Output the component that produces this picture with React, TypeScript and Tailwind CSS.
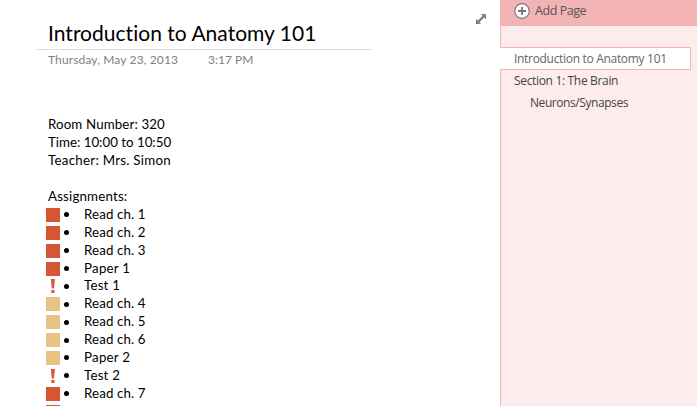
type Mark = "red" | "tan" | "important";

const assignments: { label: string; mark: Mark; spacing: string }[] = [
  { label: "Read ch. 1", mark: "red", spacing: "tracking-[0.12px]" },
  { label: "Read ch. 2", mark: "red", spacing: "tracking-[0.12px]" },
  { label: "Read ch. 3", mark: "red", spacing: "tracking-[0.12px]" },
  { label: "Paper 1", mark: "red", spacing: "tracking-[0.25px]" },
  { label: "Test 1", mark: "important", spacing: "tracking-[0.2px]" },
  { label: "Read ch. 4", mark: "tan", spacing: "tracking-[0.12px]" },
  { label: "Read ch. 5", mark: "tan", spacing: "tracking-[0.12px]" },
  { label: "Read ch. 6", mark: "tan", spacing: "tracking-[0.12px]" },
  { label: "Paper 2", mark: "tan", spacing: "tracking-[0.25px]" },
  { label: "Test 2", mark: "important", spacing: "tracking-[0.2px]" },
  { label: "Read ch. 7", mark: "red", spacing: "tracking-[0.12px]" },
  { label: "", mark: "red", spacing: "tracking-normal" },
];

function Tag({ mark }: { mark: Mark }) {
  if (mark === "important") {
    return (
      <svg className="h-3.5 w-3.5 shrink-0" viewBox="0 0 14 14" fill="#d95a3a">
        <path d="M4.8 0H9L8 9.6H5.8Z" />
        <rect x="5.3" y="11" width="3.2" height="3" />
      </svg>
    );
  }
  return <span className={`h-3.5 w-3.5 shrink-0 ${mark === "red" ? "bg-[#d65532]" : "bg-[#e8c282]"}`} />;
}

export default function App() {
  return (
    <div className="flex h-[406px] w-[697px] overflow-hidden bg-white">
      <main className="flex w-[500px] shrink-0 justify-between font-['Lato',sans-serif] text-black [font-variant-ligatures:none]">
        <div className="w-[372px] whitespace-nowrap">
          <header className="ml-9 h-[50px] border-b border-[#dedede] pt-[18px] pl-3">
            <h1 className="text-[21px] leading-[30px] tracking-[0.02px]">Introduction to Anatomy 101</h1>
          </header>
          <div className="flex h-5 pl-12 text-[12px] leading-5 text-[#808080]">
            <span className="w-40 tracking-[0.13px]">Thursday, May 23, 2013</span>
            <span>3:17 PM</span>
          </div>
          <div className="mt-[46px] text-[13.3px] leading-[17.9px]">
            <div className="pl-12">
              <p className="tracking-[0.13px]">Room Number: 320</p>
              <p>Time: 10:00 to 10:50</p>
              <p className="tracking-[0.27px]">Teacher: Mrs. Simon</p>
              <p className="mt-[17.9px] tracking-[0.18px]">Assignments:</p>
            </div>
            <ul className="pt-[0.4px] pl-[46px]">
              {assignments.map((a, i) => (
                <li key={i} className="flex h-[17.9px] items-center">
                  <Tag mark={a.mark} />
                  <span className={`ml-[3.5px] h-[5px] w-[5px] rounded-full ${a.label ? "bg-black" : ""}`} />
                  <span className={`ml-[15.5px] ${a.spacing}`}>{a.label}</span>
                </li>
              ))}
            </ul>
          </div>
        </div>
        <svg className="mt-[13px] mr-[13px] h-3 w-3" viewBox="0 0 12 12" fill="#808080">
          <path d="M5.8 1H11V6.2L9.2 4.4 4.4 9.2 6.2 11H1V5.8L2.8 7.6 7.6 2.8Z" />
        </svg>
      </main>
      <aside className="flex grow flex-col bg-[#fcecec] font-['Open_Sans',sans-serif] text-[12px] text-[#555] whitespace-nowrap">
        <div className="flex h-[26px] items-center bg-[#f2b4b4] pb-1 pl-3.5">
          <svg className="h-4 w-4" viewBox="0 0 16 16" fill="#fff" stroke="#777">
            <circle cx="8" cy="8" r="7.3" strokeWidth="1.2" />
            <path d="M8 4v8M4 8h8" strokeWidth="1.8" />
          </svg>
          <span className="ml-[5px] text-[12.5px] tracking-[-0.45px]">Add Page</span>
        </div>
        <div className="h-[21px] border-l border-[#f2b4b4]" />
        <div className="mr-1.5 h-[23px] border-y border-r border-[#f2b4b4] bg-white pl-3.5 leading-[21px] tracking-[-0.31px] text-[#666]">
          Introduction to Anatomy 101
        </div>
        <div className="grow border-l border-[#f2b4b4] pl-[13px] leading-[22px] text-[#444]">
          <p className="tracking-[-0.33px]">Section 1: The Brain</p>
          <p className="pl-4 tracking-[-0.43px]">Neurons/Synapses</p>
        </div>
      </aside>
    </div>
  );
}
